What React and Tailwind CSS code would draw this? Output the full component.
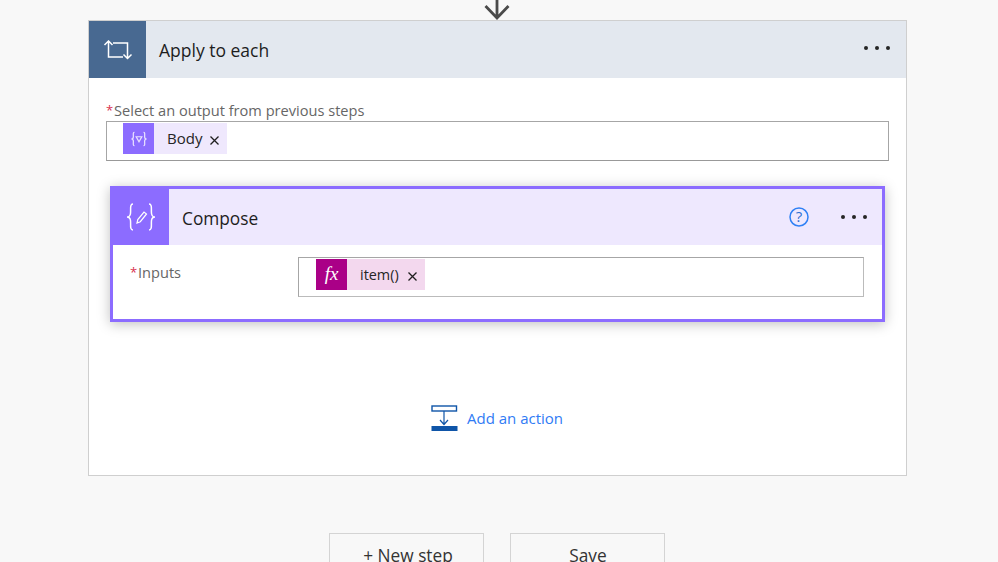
import React from 'react';

const font = { fontFamily: '"Open Sans", "Noto Sans", sans-serif' };

const Dots = () => (
  <div className="flex gap-[7px]">
    <span className="w-[4px] h-[4px] rounded-full bg-[#252525]" />
    <span className="w-[4px] h-[4px] rounded-full bg-[#252525]" />
    <span className="w-[4px] h-[4px] rounded-full bg-[#252525]" />
  </div>
);

const CloseX = () => (
  <svg width="9" height="9" viewBox="0 0 9 9" className="mt-[3px]">
    <path d="M0.5 0.5 L8.5 8.5 M8.5 0.5 L0.5 8.5" stroke="#1f1f1f" strokeWidth="1.3" fill="none" />
  </svg>
);

const Label = ({ text }) => (
  <div className="text-[14.6px] leading-[18px] text-[#666] flex">
    <span className="text-[#d9304f] text-[13px] w-[8px]">*</span>
    {text}
  </div>
);

const App = () => {
  return (
    <div className="w-[998px] h-[562px] overflow-hidden bg-[#f8f8f8] pl-[88px] pr-[91px] flex flex-col" style={font}>
      {/* Connector arrow */}
      <div className="h-[20px] flex justify-center shrink-0 pr-[1px]">
        <svg width="28" height="20" viewBox="0 0 28 20">
          <path d="M14 0 V18 M2.5 6 L14 18 L25.5 6" stroke="#4a4a4a" strokeWidth="2.8" fill="none" />
        </svg>
      </div>

      {/* Apply to each */}
      <div className="h-[456px] shrink-0 border border-[#cfcfcf] bg-white flex flex-col">
        <div className="h-[57px] bg-[#e3e8ef] flex items-center shrink-0">
          <div className="w-[57px] h-[57px] bg-[#486991] flex items-center justify-center">
            <svg width="30" height="20" viewBox="0 0 30 20" fill="none" stroke="#fff" strokeWidth="1.5">
              <path d="M1.5 5 L5.5 1 L9.5 5 M5.5 1.5 V17 H20" />
              <path d="M10 3 H24.5 V18.5 M20.5 14.5 L24.5 18.5 L28.5 14.5" />
            </svg>
          </div>
          <div className="ml-[13px] mt-[1px] text-[17.5px] text-[#1d1d1d] flex-1">Apply to each</div>
          <div className="mr-[16px] -mt-[3px]"><Dots /></div>
        </div>

        <div className="px-[17px] pt-[23px]">
          <Label text="Select an output from previous steps" />
          <div className="h-[40px] mt-[2px] border border-[#a6a6a6] border-b-[#999] flex items-start pt-[1px] pl-[16px]">
            <div className="h-[31px] flex items-center bg-[#efe8fd]">
              <div className="w-[31px] h-[31px] bg-[#8c6cff] flex items-center justify-center">
                <svg width="18" height="16" viewBox="0 0 16 14" fill="none" stroke="#e9e2ff" strokeWidth="1.1">
                  <path d="M4 1 C2.5 1 3 3 3 5 C3 6 2.5 7 1.2 7 C2.5 7 3 8 3 9 C3 11 2.5 13 4 13" />
                  <path d="M12 1 C13.5 1 13 3 13 5 C13 6 13.5 7 14.8 7 C13.5 7 13 8 13 9 C13 11 13.5 13 12 13" />
                  <path d="M5.5 5 H10.5 L8 9.5 Z" />
                </svg>
              </div>
              <span className="ml-[13px] text-[15px] text-[#252525]">Body</span>
              <div className="ml-[8px] mr-[8px]"><CloseX /></div>
            </div>
          </div>
        </div>

        {/* Compose */}
        <div className="mt-[25px] ml-[21px] mr-[21px] h-[136px] border-[3px] border-[#8c6cff] bg-white shadow-[0_2px_12px_rgba(0,0,0,0.25)] flex flex-col">
          <div className="h-[56px] bg-[#eee8fe] flex items-center shrink-0">
            <div className="w-[56px] h-[56px] bg-[#8c6cff] flex items-center justify-center">
              <svg width="30" height="28" viewBox="0 0 30 28" fill="none" stroke="#fff" strokeWidth="1.5">
                <path d="M7 1 C3.5 1 5 7 4.5 10.5 C4.2 12.5 3 14 1 14 C3 14 4.2 15.5 4.5 17.5 C5 21 3.5 27 7 27" />
                <path d="M23 1 C26.5 1 25 7 25.5 10.5 C25.8 12.5 27 14 29 14 C27 14 25.8 15.5 25.5 17.5 C25 21 26.5 27 23 27" />
                <path d="M11 20 L11.8 16.5 L18 9 L20.5 11 L14.3 18.7 Z" strokeWidth="1.2" />
              </svg>
            </div>
            <div className="ml-[13px] mt-[3px] text-[17.3px] text-[#1d1d1d] flex-1">Compose</div>
            <svg width="20" height="20" viewBox="0 0 20 20" className="mr-[32px] -mt-[1px]">
              <circle cx="10" cy="10" r="9" fill="none" stroke="#2f80f5" strokeWidth="1.5" />
              <text x="10" y="15" textAnchor="middle" fontSize="15" fill="#2f6fd0">?</text>
            </svg>
            <div className="mr-[15px] -mt-[1px]"><Dots /></div>
          </div>
          <div className="flex pl-[17px] pr-[18px] pt-[12px]">
            <div className="w-[168px] pt-[6px]">
              <Label text="Inputs" />
            </div>
            <div className="flex-1 h-[40px] border border-[#a6a6a6] border-r-[#bbb] border-b-[#bbb] flex items-start pt-[1px] pl-[17px]">
              <div className="h-[31px] flex items-center bg-[#f3d8ee]">
                <div className="w-[31px] h-[31px] bg-[#aa0087] flex items-center justify-center text-white italic text-[19px]" style={{ fontFamily: '"Liberation Serif", serif' }}>
                  fx
                </div>
                <span className="ml-[13px] mt-[1px] text-[14.4px] text-[#252525]">item()</span>
                <div className="ml-[9px] mr-[8px] mt-[1px]"><CloseX /></div>
              </div>
            </div>
          </div>
        </div>

        {/* Add an action */}
        <div className="mt-[83px] flex items-center justify-center gap-[9px] pr-[1px]">
          <svg width="27" height="26" viewBox="0 0 27 26" fill="none" stroke="#0f55a8">
            <rect x="1" y="1" width="24.5" height="5" strokeWidth="1.4" />
            <path d="M13 6 V19 M9 15 L13 19.5 L17 15" strokeWidth="1.2" />
            <rect x="0.5" y="21" width="26" height="5" fill="#0f55a8" stroke="none" />
          </svg>
          <span className="text-[15px] text-[#2f7bf5]">Add an action</span>
        </div>
      </div>

      {/* Bottom buttons */}
      <div className="mt-[57px] flex justify-center gap-[26px] pr-[1px]">
        <div className="w-[155px] h-[50px] border border-[#d4d4d4] bg-[#f8f8f8] text-[17.3px] text-[#333] flex justify-center pt-[9px] pl-[3px]">+ New step</div>
        <div className="w-[155px] h-[50px] border border-[#d4d4d4] bg-[#f8f8f8] text-[17.3px] text-[#333] flex justify-center pt-[9px] pl-[1px]">Save</div>
      </div>
    </div>
  );
};

export default App;
